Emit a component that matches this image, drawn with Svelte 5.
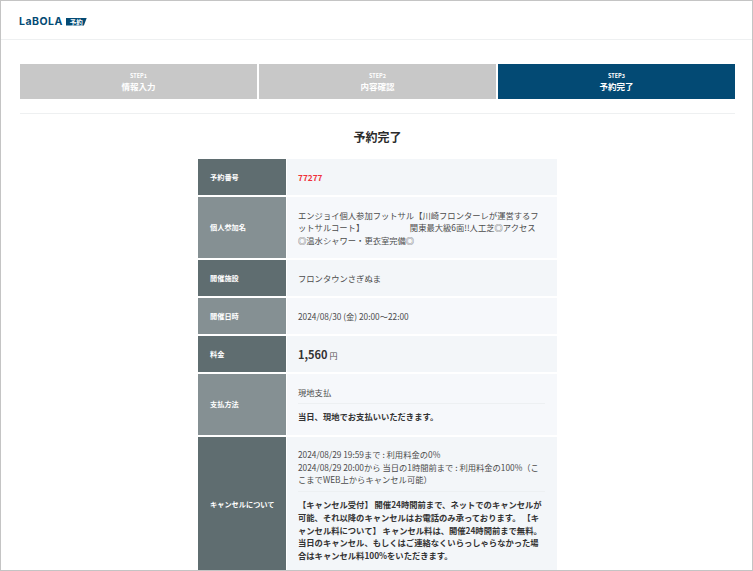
<script>
// reservation summary rows, shade alternates by row
const rows = [
  { label: "予約番号", kind: "number", value: "77277" },
  { label: "個人参加名", kind: "text", value: "エンジョイ個人参加フットサル【川崎フロンターレが運営するフットサルコート】　　　　　　関東最大級6面!!人工芝◎アクセス\n◎温水シャワー・更衣室完備◎" },
  { label: "開催施設", kind: "text", value: "フロンタウンさぎぬま" },
  { label: "開催日時", kind: "text", value: "2024/08/30 (金) 20:00〜22:00" },
  { label: "料金", kind: "price", value: "1,560" },
  { label: "支払方法", kind: "split", value: ["現地支払"], note: "当日、現地でお支払いいただきます。" },
  {
    label: "キャンセルについて",
    kind: "split",
    value: ["2024/08/29 19:59まで : 利用料金の0%", "2024/08/29 20:00から 当日の1時間前まで : 利用料金の100%（ここまでWEB上からキャンセル可能）"],
    note: "【キャンセル受付】 開催24時間前まで、ネットでのキャンセルが可能、それ以降のキャンセルはお電話のみ承っております。 【キャンセル料について】 キャンセル料は、開催24時間前まで無料。当日のキャンセル、もしくはご連絡なくいらっしゃらなかった場合はキャンセル料100%をいただきます。"
  }
];

const steps = [
  { no: "STEP1", name: "情報入力" },
  { no: "STEP2", name: "内容確認" },
  { no: "STEP3", name: "予約完了", active: true }
];
</script>

<div class="frame">
  <header>
    <span class="logo">LaBOLA</span>
    <span class="badge">予約</span>
  </header>

  <main>
    <div class="steps">
      {#each steps as step}
        <div class="step" class:active={step.active}>
          <span class="no">{step.no}</span>
          <span class="name">{step.name}</span>
        </div>
      {/each}
    </div>

    <h1>予約完了</h1>

    <div class="table">
      {#each rows as row, i}
        <div class="th" class:light={i % 2 === 1}>{row.label}</div>
        <div class="td" class:light={i % 2 === 1}>
          {#if row.kind === "number"}
            <span class="number">{row.value}</span>
          {:else if row.kind === "price"}
            <div class="cost"><span class="price">{row.value}</span> <span class="yen">円</span></div>
          {:else if row.kind === "split"}
            <div class="top">
              {#each row.value as line}
                <div>{line}</div>
              {/each}
            </div>
            <div class="note">{row.note}</div>
          {:else}
            <div class="plain">{row.value}</div>
          {/if}
        </div>
      {/each}
    </div>
  </main>
</div>

<style>
  :global(body) {
    margin: 0;
    background: #fff;
  }

  .frame {
    box-sizing: border-box;
    height: 571px;
    overflow: hidden;
    border: 1px solid #c4c4c4;
    font-family: "Noto Sans CJK JP", "Noto Sans", sans-serif;
    color: #4c4c4c;
  }

  header {
    display: flex;
    align-items: center;
    gap: 3px;
    box-sizing: border-box;
    height: 39px;
    padding: 3px 0 0 18px;
    border-bottom: 1px solid #eef0f1;
  }

  .logo {
    font-family: "Inter", sans-serif;
    font-size: 10.5px;
    font-weight: 700;
    letter-spacing: 0.5px;
    color: #034a74;
  }

  .badge {
    width: 21px;
    height: 8px;
    background: #034a74;
    clip-path: polygon(0 0, 100% 0, 86% 100%, 0 100%);
    color: #fff;
    font-size: 6.5px;
    font-weight: 700;
    line-height: 8px;
    text-align: center;
  }

  main {
    margin: 24px 17px 0 19px;
  }

  .steps {
    display: grid;
    grid-template-columns: repeat(3, 1fr);
    gap: 2px;
    padding-bottom: 14px;
    border-bottom: 1px solid #eef0f1;
  }

  .step {
    display: flex;
    flex-direction: column;
    align-items: center;
    justify-content: center;
    height: 35px;
    background: #c8c8c8;
    color: #fff;
  }

  .step.active {
    background: #034a74;
  }

  .no {
    font-size: 5.5px;
    font-weight: 700;
    line-height: 8px;
  }

  .name {
    font-size: 8.5px;
    font-weight: 700;
    line-height: 12px;
  }

  h1 {
    margin: 14px 0 13px;
    font-size: 12px;
    font-weight: 700;
    line-height: 18px;
    text-align: center;
    color: #2b2b2b;
  }

  .table {
    display: grid;
    grid-template-columns: 88px 270px;
    gap: 2px 1px;
    margin-left: 178px;
    width: 359px;
    font-size: 8.3px;
    line-height: 12.7px;
  }

  .th {
    display: flex;
    align-items: center;
    padding-left: 12px;
    background: #5f6d70;
    color: #fff;
    font-weight: 700;
    font-size: 7.2px;
  }

  .th.light {
    background: #859093;
  }

  .td {
    box-sizing: border-box;
    display: flex;
    flex-direction: column;
    justify-content: center;
    height: auto;
    min-height: 36px;
    padding: 11.5px 12px 11.5px 11px;
    background: #f3f6f9;
  }

  .td.light {
    background: #f6f8fb;
  }

  .plain {
    white-space: pre-line;
  }

  .number {
    color: #f0323c;
    font-weight: 700;
  }

  .cost {
    height: 13px;
    line-height: 13px;
  }

  .price {
    font-size: 11px;
    font-weight: 700;
    color: #333;
  }

  .yen {
    font-size: 8px;
  }

  .top {
    padding-bottom: 5px;
    border-bottom: 1px solid #edf0f2;
  }

  .note {
    padding-top: 6px;
    font-weight: 700;
    color: #333;
  }
</style>
